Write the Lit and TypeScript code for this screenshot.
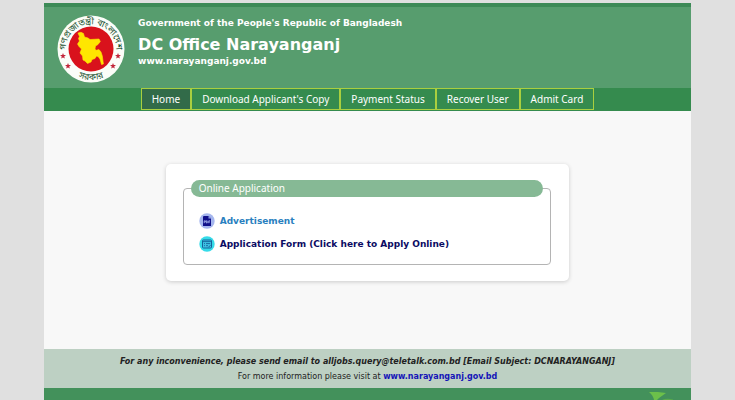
import { LitElement, html, css, svg } from "lit";
import { customElement, property } from "lit/decorators.js";
import { classMap } from "lit/directives/class-map.js";

const star = (x: number, y: number) => svg`
  <path fill="#c2263a" transform="translate(${x} ${y})"
    d="M0-3 .8-1 3-.9 1.2.5 1.9 2.6 0 1.4-1.9 2.6-1.2.5-3-.9-.8-1Z"/>`;

@customElement("gov-seal")
export class GovSeal extends LitElement {
  static styles = css`
    :host { display: block; flex: none; }
    .seal { display: block; width: 68px; height: 68px; }
    .ring { font: 9px "Noto Sans Bengali", "Noto Sans", sans-serif; fill: #1f5535; }
  `;
  render() {
    return html`
      <svg class="seal" viewBox="0 0 68 68" role="img" aria-label="Seal of the Government of Bangladesh">
        <defs>
          <path id="top" d="M10.5 44A25.3 25.3 0 1 1 57.5 44"/>
          <path id="bottom" d="M10 53.6A31 31 0 0 0 58 53.6"/>
        </defs>
        <circle cx="34" cy="34" r="33.5" fill="#fbfdf8"/>
        <circle cx="34" cy="34" r="22.5" fill="#d9121c"/>
        <path fill="#ffe600" stroke="#ffe600" stroke-width=".6" stroke-linejoin="round" d="M21 18 24 17.3 26.5 18.5 27.5 22 31 23 33 24.5 42 24 43.3 26.5 41 29.5 38.5 31 38 34 39 35.3 42 34.6 44 37 45.3 41 46.4 49 44.5 49.5 43 44 41 41.5 39.5 41 38 43.5 35 44.5 34 47 30.5 48.5 28 46 26 45 25.5 41 23 38 24.5 34 22 31.5 20.5 29 22.5 26 21.5 23.5 22.5 21.5Z"/>
        <text class="ring" text-anchor="middle"><textPath href="#top" startOffset="50%">গণপ্রজাতন্ত্রী বাংলাদেশ</textPath></text>
        <text class="ring" text-anchor="middle"><textPath href="#bottom" startOffset="50%">সরকার</textPath></text>
        ${star(6, 41)}${star(11, 51)}${star(61, 41)}${star(56, 51)}
      </svg>`;
  }
}

@customElement("site-header")
export class SiteHeader extends LitElement {
  static styles = css`
    :host { display: block; font-family: "DejaVu Sans", Verdana, sans-serif; }
    .banner {
      display: flex; align-items: flex-start; gap: 13px;
      padding: 8px 13px 5px; border-top: 4px solid #3d8a57;
      background: #579d6e; color: #fff;
    }
    .titles { font-weight: bold; font-size: 9px; line-height: 14px; padding-top: 1px; }
    .line { margin: 0; }
    .name { margin: 5px 0 0; font-size: 16px; line-height: 19px; }
  `;
  render() {
    return html`
      <header class="banner">
        <gov-seal></gov-seal>
        <div class="titles">
          <p class="line">Government of the People's Republic of Bangladesh</p>
          <h1 class="name">DC Office Narayanganj</h1>
          <p class="line">www.narayanganj.gov.bd</p>
        </div>
      </header>`;
  }
}

@customElement("site-nav")
export class SiteNav extends LitElement {
  @property({ attribute: false }) items: string[] = [];
  static styles = css`
    :host { display: block; }
    .bar { display: flex; justify-content: center; background: #358b4e; padding-bottom: 1px; }
    .tab {
      padding: 0 10px; border: 1px solid #a9cf3f;
      font-size: 10px; line-height: 20px; color: #fff; text-decoration: none; white-space: nowrap;
    }
    .current { background: #326b49; }
  `;
  render() {
    return html`
      <nav class="bar">
        ${this.items.map((label, i) => html`
          <a class=${classMap({ tab: true, current: i === 0 })} href="#">${label}</a>`)}
      </nav>`;
  }
}

@customElement("application-card")
export class ApplicationCard extends LitElement {
  static styles = css`
    :host { display: block; }
    .card {
      box-sizing: border-box; width: 62.4%; margin: 0 auto; padding: 16px 18px 16px 17px;
      background: #fff; border-radius: 5px; box-shadow: 0 1px 4px #0000002e;
    }
    .group { margin: 0; padding: 16px 7px 12px; border: 1px solid #b4b4b4; border-radius: 4px; min-width: 0; }
    .title {
      box-sizing: border-box; width: 100%; padding: 0 8px; border-radius: 9px;
      background: #86b995; color: #fff; font-size: 10px; line-height: 17px;
    }
    .links { margin: 0; padding: 0 8px; list-style: none; display: grid; gap: 7px; }
    .link {
      display: flex; align-items: center; gap: 5px; width: fit-content;
      font-family: "DejaVu Sans", Verdana, sans-serif;
      font-weight: bold; font-size: 9px; line-height: 16px; text-decoration: none; white-space: nowrap;
    }
    .notice { color: #2a7fc0; }
    .apply { color: #0b0b63; }
    .icon { display: block; flex: none; width: 16px; height: 16px; }
  `;
  render() {
    return html`
      <section class="card">
        <fieldset class="group">
          <legend class="title">Online Application</legend>
          <ul class="links">
            <li><a class="link notice" href="#">
              <svg class="icon" viewBox="0 0 16 16" aria-hidden="true">
                <circle cx="8" cy="8" r="7.7" fill="#a5b6ee"/>
                <path fill="#10108a" d="M5 3h4.6L12 5.4V13H4V4q0-1 1-1Z"/>
                <path fill="#8fa4e6" d="M9.5 3v2.5H12Z"/>
                <path fill="none" stroke="#aab8f0" stroke-width=".8" d="M5.2 10.2V7.8h1.2v1.2H5.2M7.4 7.8v2.2h.8l.5-.6V8.3l-.5-.5ZM9.8 10.2V7.8h1.3M9.8 9h1"/>
              </svg>
              Advertisement</a></li>
            <li><a class="link apply" href="#">
              <svg class="icon" viewBox="0 0 16 16" aria-hidden="true">
                <circle cx="8" cy="8" r="7.7" fill="#35dbe9"/>
                <rect x="3.5" y="4" width="9" height="8" rx=".8" fill="#3fc3e6" stroke="#15639b"/>
                <path stroke="#15639b" stroke-width=".9" d="M3.5 5.6h9M5 7.6h1M7 7.6h4.2M5 9.7h1M7 9.7h2"/>
                <path stroke="#15639b" d="M9.5 11.2l2-2"/>
              </svg>
              Application Form (Click here to Apply Online)</a></li>
          </ul>
        </fieldset>
      </section>`;
  }
}

@customElement("site-footer")
export class SiteFooter extends LitElement {
  static styles = css`
    :host { display: block; font-family: "DejaVu Sans", Verdana, sans-serif; }
    .notes { padding: 5px 0 4px; background: #bdd0c3; color: #222; text-align: center; font-size: 8px; line-height: 15px; }
    .line { margin: 0; }
    .help { font-weight: bold; font-style: italic; }
    .site { font-weight: bold; color: #1414b8; text-decoration: none; }
    .base { display: flex; justify-content: flex-end; padding: 4px 18px 0 0; background: #43915b; }
    .leaf { display: block; width: 24px; height: 8px; }
  `;
  render() {
    return html`
      <footer>
        <div class="notes">
          <p class="line help">For any inconvenience, please send email to alljobs.query@teletalk.com.bd [Email Subject: DCNARAYANGANJ]</p>
          <p class="line">For more information please visit at <a class="site" href="#">www.narayanganj.gov.bd</a></p>
        </div>
        <div class="base">
          <svg class="leaf" viewBox="0 0 24 8" aria-hidden="true">
            <path fill="#6cc04a" d="M0 0Q9-.5 17 1L10 6 8 8H5Q4 3 0 0Z"/>
            <path fill="#5bab4c" d="M13 8q4-2 11-.6V8Z"/>
          </svg>
        </div>
      </footer>`;
  }
}

@customElement("app-root")
export class AppRoot extends LitElement {
  static styles = css`
    :host {
      display: block; min-height: 100vh; box-sizing: border-box; padding-top: 3px;
      background: #e0e0e0; font-family: "Noto Sans", Verdana, sans-serif;
    }
    .page { width: 88%; margin: 0 auto; background: #f8f8f8; }
    .content { padding: 53px 0 68px; }
  `;
  private tabs = ["Home", "Download Applicant's Copy", "Payment Status", "Recover User", "Admit Card"];
  render() {
    return html`
      <div class="page">
        <site-header></site-header>
        <site-nav .items=${this.tabs}></site-nav>
        <main class="content"><application-card></application-card></main>
        <site-footer></site-footer>
      </div>`;
  }
}
